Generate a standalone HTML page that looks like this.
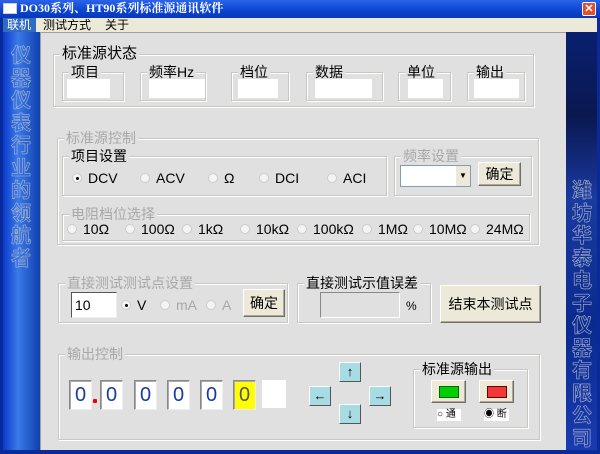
<!DOCTYPE html>
<html><head><meta charset="utf-8"><style>
*{margin:0;padding:0;box-sizing:border-box}
body{width:600px;height:454px;overflow:hidden;background:#0a2a9a;font-family:"Liberation Sans","Noto Sans CJK SC",sans-serif;font-size:13px;position:relative}
.a{position:absolute}
.title{left:0;top:0;width:600px;height:18px;background:linear-gradient(#2a62e8,#0a44d0 60%,#0838b8);color:#fff;font-family:"Liberation Serif","Noto Serif CJK SC",serif;font-weight:bold;font-size:12px;line-height:17px;padding-left:20px}
.menu{left:3px;top:18px;width:594px;height:14px;background:#ece9d8;font-size:12px;line-height:14px}
.main{left:40px;top:32px;width:526px;height:418px;background:#e0e0e0;border-top:1px solid #a0a0a0;border-left:1px solid #a0a0a0}
.strip{background:linear-gradient(90deg,#0a3acc,#3a7ae8 40%,#1040b0);}
.vt{color:transparent;-webkit-text-stroke:0.6px #b0b8c8;font-weight:bold;font-size:20px;width:30px;text-align:center}
.vt span{display:block;height:22.5px;line-height:22.5px}
.gb{position:absolute;border:1px solid #c8c8c0;box-shadow:inset 1px 1px #fff,1px 1px #fff}
.gl{position:absolute;top:-10px;left:6px;background:#e0e0e0;padding:0 2px;font-size:14px;line-height:18px;color:#000}
.dis{color:#a8a8a8}
.wb{position:absolute;background:#fff}
.rb{position:absolute;display:flex;align-items:center;font-size:14px}
.rb i{display:inline-block;width:10px;height:10px;border-radius:50%;background:#f4f4f4;border:1px solid #ccc;margin-right:6px;position:relative}
.rb i.on:after{content:"";position:absolute;left:3px;top:3px;width:3px;height:3px;background:#000;border-radius:50%}
.btn{position:absolute;background:#ece9d8;border:1px solid;border-color:#fff #716f64 #716f64 #fff;box-shadow:inset -1px -1px #aca899;font-size:14px;text-align:center}
.dg{position:absolute;top:380px;width:23px;height:30px;background:#fff;border:1px solid;border-color:#888 #eee #eee #888;box-shadow:inset 1px 1px #aaa;font-size:20px;line-height:28px;text-align:center;color:#1a3aa0}
.ar{position:absolute;width:22px;height:20px;background:#a8dce4;border:1px solid;border-color:#fff #555 #555 #fff;font-size:13px;font-weight:bold;text-align:center;line-height:18px}
</style></head><body>
<div class="a title"><div class="a" style="left:3px;top:3px;width:14px;height:11px;background:#fff;border:1px solid #ccc"></div>DO30系列、HT90系列标准源通讯软件</div>
<div class="a" style="left:582px;top:2px;width:14px;height:14px;background:#e05030;border:1px solid #fff;border-radius:2px;color:#fff;font-size:11px;line-height:12px;text-align:center;font-weight:bold">✕</div>
<div class="a menu"><span style="display:inline-block;background:#316ac5;color:#fff;width:33px;padding-left:4px">联机</span><span style="margin-left:7px">测试方式</span><span style="margin-left:14px">关于</span></div>
<div class="a strip" style="left:3px;top:32px;width:37px;height:418px"></div>
<div class="a strip" style="left:566px;top:32px;width:31px;height:418px;background:linear-gradient(180deg,#0a2070,#0a1850 20%,#1a3aa0 40%,#0a2a90 70%,#1a3ab0)"></div>
<div class="a vt" style="left:6px;top:45px"><span>仪</span><span>器</span><span>仪</span><span>表</span><span>行</span><span>业</span><span>的</span><span>领</span><span>航</span><span>者</span></div>
<div class="a vt" style="left:567px;top:180px"><span>潍</span><span>坊</span><span>华</span><span>泰</span><span>电</span><span>子</span><span>仪</span><span>器</span><span>有</span><span>限</span><span>公</span><span>司</span></div>
<div class="a main"></div>

<div class="gb" style="left:53px;top:54px;width:481px;height:53px"><span class="gl" style="font-size:15px">标准源状态</span></div>
<div class="gb" style="left:62px;top:72px;width:62px;height:29px"><span class="gl">项目</span></div><div class="wb" style="left:67px;top:79px;width:43px;height:19px"></div>
<div class="gb" style="left:140px;top:72px;width:66px;height:29px"><span class="gl">频率Hz</span></div><div class="wb" style="left:149px;top:79px;width:56px;height:19px"></div>
<div class="gb" style="left:231px;top:72px;width:58px;height:29px"><span class="gl">档位</span></div><div class="wb" style="left:238px;top:79px;width:40px;height:19px"></div>
<div class="gb" style="left:306px;top:72px;width:77px;height:29px"><span class="gl">数据</span></div><div class="wb" style="left:315px;top:79px;width:57px;height:19px"></div>
<div class="gb" style="left:398px;top:72px;width:53px;height:29px"><span class="gl">单位</span></div><div class="wb" style="left:408px;top:79px;width:35px;height:19px"></div>
<div class="gb" style="left:467px;top:72px;width:58px;height:29px"><span class="gl">输出</span></div><div class="wb" style="left:474px;top:79px;width:45px;height:19px"></div>

<div class="gb" style="left:57px;top:138px;width:482px;height:107px"><span class="gl dis">标准源控制</span></div>
<div class="gb" style="left:62px;top:156px;width:325px;height:40px"><span class="gl">项目设置</span></div>
<div class="rb" style="left:72px;top:170px"><i class="on"></i>DCV</div>
<div class="rb" style="left:140px;top:170px"><i></i>ACV</div>
<div class="rb" style="left:208px;top:170px"><i></i>Ω</div>
<div class="rb" style="left:259px;top:170px"><i></i>DCI</div>
<div class="rb" style="left:327px;top:170px"><i></i>ACI</div>
<div class="gb" style="left:394px;top:156px;width:138px;height:40px"><span class="gl dis">频率设置</span></div>
<div class="wb" style="left:400px;top:165px;width:71px;height:22px;border:1px solid #7f9db9"><div class="a" style="right:0;top:0;width:14px;height:20px;background:#ece9d8;font-size:8px;text-align:center;line-height:20px">▼</div></div>
<div class="btn" style="left:478px;top:162px;width:43px;height:24px;line-height:22px">确定</div>
<div class="gb" style="left:62px;top:214px;width:468px;height:27px"><span class="gl dis">电阻档位选择</span></div>
<div class="rb" style="left:67px;top:221px"><i></i>10Ω</div>
<div class="rb" style="left:125px;top:221px"><i></i>100Ω</div>
<div class="rb" style="left:182px;top:221px"><i></i>1kΩ</div>
<div class="rb" style="left:240px;top:221px"><i></i>10kΩ</div>
<div class="rb" style="left:297px;top:221px"><i></i>100kΩ</div>
<div class="rb" style="left:362px;top:221px"><i></i>1MΩ</div>
<div class="rb" style="left:413px;top:221px"><i></i>10MΩ</div>
<div class="rb" style="left:470px;top:221px"><i></i>24MΩ</div>

<div class="gb" style="left:58px;top:283px;width:230px;height:40px"><span class="gl dis">直接测试测试点设置</span></div>
<div class="wb" style="left:71px;top:292px;width:46px;height:26px;border:1px solid;border-color:#555 #eee #eee #555;font-size:14px;line-height:24px;padding-left:3px">10</div>
<div class="rb" style="left:121px;top:297px"><i class="on"></i>V</div>
<div class="rb dis" style="left:160px;top:297px"><i></i>mA</div>
<div class="rb dis" style="left:206px;top:297px"><i></i>A</div>
<div class="btn" style="left:243px;top:289px;width:42px;height:28px;line-height:26px">确定</div>
<div class="gb" style="left:297px;top:283px;width:134px;height:40px"><span class="gl">直接测试示值误差</span></div>
<div class="a" style="left:320px;top:292px;width:80px;height:26px;border:1px solid;border-color:#888 #fff #fff #888;background:#e0e0e0"></div>
<div class="a" style="left:406px;top:299px;font-size:12px">%</div>
<div class="btn" style="left:440px;top:285px;width:101px;height:38px;line-height:36px">结束本测试点</div>

<div class="gb" style="left:58px;top:354px;width:482px;height:86px"><span class="gl dis">输出控制</span></div>
<div class="dg" style="left:69px">0</div>
<div class="a" style="left:93px;top:399px;width:4px;height:4px;background:#e00;border-radius:1px"></div>
<div class="dg" style="left:100px">0</div>
<div class="dg" style="left:134px">0</div>
<div class="dg" style="left:167px">0</div>
<div class="dg" style="left:200px">0</div>
<div class="dg" style="left:233px;background:#ff0;color:#555">0</div>
<div class="a" style="left:262px;top:380px;width:24px;height:28px;background:#fff"></div>
<div class="ar" style="left:339px;top:362px">↑</div>
<div class="ar" style="left:309px;top:386px">←</div>
<div class="ar" style="left:369px;top:386px">→</div>
<div class="ar" style="left:339px;top:404px">↓</div>
<div class="gb" style="left:413px;top:369px;width:115px;height:59px"><span class="gl">标准源输出</span></div>
<div class="btn" style="left:431px;top:380px;width:35px;height:23px"><div class="a" style="left:7px;top:5px;width:20px;height:12px;background:#00d000;border:1px solid #060"></div></div>
<div class="btn" style="left:479px;top:380px;width:35px;height:23px"><div class="a" style="left:7px;top:5px;width:20px;height:12px;background:#f03838;border:1px solid #600"></div></div>
<div class="a" style="left:437px;top:409px;width:24px;height:12px;background:#fff;font-size:10px;line-height:12px">○ 通</div>
<div class="a" style="left:484px;top:409px;width:25px;height:12px;background:#fff;font-size:10px;line-height:12px">◉ 断</div>
</body></html>
